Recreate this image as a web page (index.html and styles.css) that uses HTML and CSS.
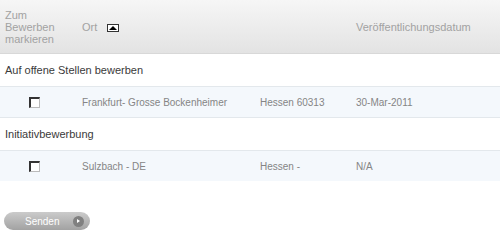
FILE: index.html
```html
<!DOCTYPE html>
<html>
<head>
<meta charset="utf-8">
<link rel="stylesheet" href="styles.css">
</head>
<body>
<table class="jobs">
  <thead>
    <tr class="head">
      <th class="c-check">Zum<br>Bewerben<br>markieren</th>
      <th class="c-ort">Ort <span class="sort"><span class="tri"></span></span></th>
      <th class="c-region"></th>
      <th class="c-date">Veröffentlichungsdatum</th>
    </tr>
  </thead>
  <tbody>
    <tr class="group"><td colspan="4">Auf offene Stellen bewerben</td></tr>
    <tr class="row">
      <td class="c-check"><span class="cb"></span></td>
      <td>Frankfurt- Grosse Bockenheimer</td>
      <td>Hessen 60313</td>
      <td>30-Mar-2011</td>
    </tr>
    <tr class="group"><td colspan="4">Initiativbewerbung</td></tr>
    <tr class="row last">
      <td class="c-check"><span class="cb"></span></td>
      <td>Sulzbach - DE</td>
      <td>Hessen -</td>
      <td>N/A</td>
    </tr>
  </tbody>
</table>
<div class="actions">
  <button class="send">Senden <span class="arrow"></span></button>
</div>
</body>
</html>
```
FILE: styles.css
```css
html, body {
  margin: 0;
  padding: 0;
  background: #fff;
  font-family: "Liberation Sans", Arial, sans-serif;
}
.jobs {
  width: 500px;
  border-collapse: collapse;
}
.head th {
  height: 53px;
  padding: 0;
  background: linear-gradient(#f6f6f6, #e3e3e3);
  border-bottom: 1px solid #d8d8d8;
  color: #a2a2a2;
  font-size: 11px;
  font-weight: normal;
  text-align: left;
  line-height: 12px;
  vertical-align: middle;
}
.head th.c-check {
  width: 77px;
  padding-left: 5px;
}
.head th.c-ort { width: 178px; }
.head th.c-region { width: 96px; }
.sort {
  display: inline-block;
  width: 10px;
  height: 6px;
  border: 1px solid #333;
  background: #fff;
  margin-left: 7px;
  vertical-align: -1px;
  position: relative;
}
.tri {
  position: absolute;
  left: 1px;
  top: 1px;
  width: 0;
  height: 0;
  border-left: 4px solid transparent;
  border-right: 4px solid transparent;
  border-bottom: 4px solid #000;
}
.group td {
  height: 32px;
  padding: 0 0 0 5px;
  font-size: 11px;
  color: #3a3a3a;
  border-bottom: 1px solid #e3e8ec;
}
.row td {
  height: 30px;
  padding: 0;
  background: #f4f8fc;
  font-size: 10px;
  color: #858585;
  border-bottom: 1px solid #e3e8ec;
}
.row.last td { border-bottom: none; }
.row td.c-check { padding-left: 29px; }
.cb {
  display: block;
  width: 8px;
  height: 8px;
  border: 1px solid #bbb;
  border-left: 2px solid #333;
  border-top: 2px solid #333;
  background: #fff;
}
.actions {
  padding: 31px 0 0 4px;
}
.send {
  display: flex;
  align-items: center;
  width: 86px;
  height: 18px;
  padding: 0 6px 0 21px;
  border: none;
  border-radius: 9px;
  background: linear-gradient(#cbcbcb, #a2a2a2);
  color: #fff;
  font-family: "Liberation Sans", Arial, sans-serif;
  font-size: 10px;
  justify-content: space-between;
  box-sizing: border-box;
}
.arrow {
  width: 11px;
  height: 11px;
  border-radius: 50%;
  background: #808080;
  position: relative;
}
.arrow::after {
  content: "";
  position: absolute;
  left: 4px;
  top: 3px;
  border-top: 2.5px solid transparent;
  border-bottom: 2.5px solid transparent;
  border-left: 3.5px solid #fff;
}
```
